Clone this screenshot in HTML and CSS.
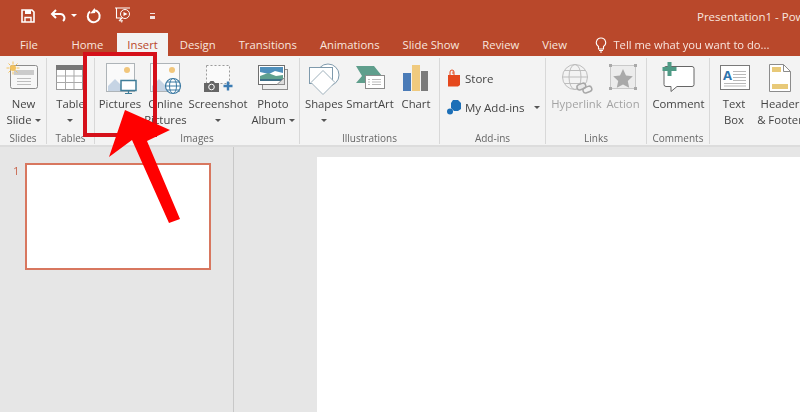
FILE: index.html
```html
<!DOCTYPE html>
<html lang="en">
<head>
<meta charset="utf-8">
<title>Presentation1 - PowerPoint</title>
<link rel="stylesheet" href="styles.css">
</head>
<body>
<div class="app">
  <header class="head">
    <div class="titlebar">
      <div class="qat">
        <svg class="q1" width="16" height="16" viewBox="0 0 16 16"><path d="M2 2h10l2 2v10H2z" fill="none" stroke="#fff" stroke-width="1.6"/><path d="M5 2h6v4H5z" fill="#fff"/><path d="M5 14V9.500h6V14" fill="none" stroke="#fff" stroke-width="1.400"/></svg>
        <svg class="q2" width="16" height="14" viewBox="0 0 16 14"><path d="M6 1 2 5l4 4" fill="none" stroke="#fff" stroke-width="2"/><path d="M2 5h8a4 4 0 0 1 3 7" fill="none" stroke="#fff" stroke-width="2"/></svg>
        <span class="caret light q3"></span>
        <svg class="q4" width="16" height="16" viewBox="0 0 16 16"><path d="M4 3.500a6 6 0 1 0 4-1.300" fill="none" stroke="#fff" stroke-width="2"/><path d="M9 0v5H4z" fill="#fff" transform="rotate(-6 8 3)"/></svg>
        <svg class="q5" width="18" height="17" viewBox="0 0 18 17"><path d="M1 1h15M2.500 1v10h6M5 14l3-3" fill="none" stroke="#fff" stroke-width="1.100"/><circle cx="11" cy="7" r="4.500" fill="none" stroke="#fff"/><path d="M9.500 5l4 2-4 2z" fill="#fff"/><path d="M5 13h4l-1 3z" fill="#f0d8cf"/></svg>
        <span class="custom q6"></span>
      </div>
      <div class="doc">Presentation1 - PowerPoint</div>
    </div>
    <nav class="tabs">
      <span class="tab file">File</span>
      <span class="tab">Home</span>
      <span class="tab active">Insert</span>
      <span class="tab">Design</span>
      <span class="tab">Transitions</span>
      <span class="tab">Animations</span>
      <span class="tab">Slide Show</span>
      <span class="tab">Review</span>
      <span class="tab">View</span>
      <span class="tell">
        <svg width="12" height="16" viewBox="0 0 12 16"><path d="M6 1a4.600 4.600 0 0 0-2.500 8.500V12h5V9.500A4.600 4.600 0 0 0 6 1z" fill="none" stroke="#fff" stroke-width="1.100"/><path d="M4 13.500h4M5 15h2" stroke="#fff"/></svg>
        Tell me what you want to do...
      </span>
    </nav>
  </header>

  <section class="ribbon">
    <div class="group g-slides">
      <div class="btns">
        <div class="btn w47">
          <svg width="47" height="36" viewBox="0 0 47 36"><rect x="10.500" y="5.500" width="27" height="23" rx="2" fill="#f7f7f7" stroke="#8c8c8c"/><rect x="14" y="10" width="20" height="5" fill="#cbcbcb"/><path d="M17 18.500h14M17 21.500h14M17 24.500h14" stroke="#bdbdbd"/><circle cx="13" cy="8" r="3" fill="#f3c25e"/><path d="M13 1.500v3M13 11.500v3M6.500 8h3M16.500 8h3M8.500 3.500l2 2M15.500 10.500l2 2M17.500 3.500l-2 2M10.500 10.500l-2 2" stroke="#f3c25e"/></svg>
          <span class="lbl">New<br>Slide <i class="caret"></i></span>
        </div>
      </div>
      <div class="gname">Slides</div>
    </div>

    <div class="group g-tables">
      <div class="btns">
        <div class="btn w47">
          <svg width="47" height="36" viewBox="0 0 47 36"><rect x="9.500" y="5.500" width="26" height="24" fill="#fff" stroke="#9a9a9a"/><rect x="9" y="5" width="27" height="5" fill="#777"/><path d="M9.500 16h26M9.500 22.500h26M18.500 10v19M27 10v19" stroke="#a9a9a9"/></svg>
          <span class="lbl">Table<br><i class="caret"></i></span>
        </div>
      </div>
      <div class="gname">Tables</div>
    </div>

    <div class="group g-images">
      <div class="btns">
        <div class="btn w46">
          <svg width="46" height="36" viewBox="0 0 46 36"><rect x="9.500" y="3.500" width="28" height="28" fill="#fafafa" stroke="#aeb4b8"/><circle cx="30" cy="10" r="3" fill="#f1c67c"/><path d="M11 31V26l7-7 7 7 3 5z" fill="#c6d4e4"/><rect x="24" y="20.500" width="15" height="10" fill="#fff" stroke="#3f7d99" stroke-width="1.500"/><path d="M31.500 31v2M28 33.500h7" stroke="#3f7d99" stroke-width="1.200"/></svg>
          <span class="lbl">Pictures</span>
        </div>
        <div class="btn w45">
          <svg width="45" height="36" viewBox="0 0 45 36"><rect x="7.500" y="3.500" width="29" height="28" fill="#fafafa" stroke="#aeb4b8"/><circle cx="29" cy="10" r="3" fill="#f1c67c"/><path d="M9 31V26l7-7 8 8v4z" fill="#c6d4e4"/><circle cx="30" cy="26" r="7.500" fill="#fff" stroke="#3c7aa3" stroke-width="1.200"/><ellipse cx="30" cy="26" rx="3.500" ry="7.500" fill="none" stroke="#3c7aa3"/><path d="M22.500 26h15M24 22h12M24 30h12" stroke="#3c7aa3"/></svg>
          <span class="lbl">Online<br>Pictures</span>
        </div>
        <div class="btn w60">
          <svg width="60" height="36" viewBox="0 0 60 36"><rect x="18.500" y="5.500" width="23" height="18" fill="#fafafa" stroke="#9b9b9b" stroke-dasharray="2 2"/><path d="M16 23h5l1.500-2h3l1.500 2h4v9H16z" fill="#666"/><circle cx="23.500" cy="27" r="2.800" fill="#666" stroke="#fff"/><path d="M40 21.500v9M35.500 26h9" stroke="#3c7cb3" stroke-width="2.400"/></svg>
          <span class="lbl">Screenshot<br><i class="caret"></i></span>
        </div>
        <div class="btn w50">
          <svg width="50" height="36" viewBox="0 0 50 36"><rect x="14.500" y="9.500" width="25" height="20" fill="#eee" stroke="#8d8d8d"/><rect x="10.500" y="5.500" width="26" height="19" fill="#fff" stroke="#6f6f6f"/><path d="M12 7h23v6l-8-2-6 3-9-2z" fill="#4f8fbb"/><path d="M12 16l8-3 8 3 7-1v4H12z" fill="#5fa08f"/><path d="M12 19h23v2H12z" fill="#3e6f87"/><path d="M29 24.500l7.500-7v7z" fill="#ddd" stroke="#8d8d8d"/></svg>
          <span class="lbl">Photo<br>Album <i class="caret"></i></span>
        </div>
      </div>
      <div class="gname">Images</div>
    </div>

    <div class="group g-illus">
      <div class="btns">
        <div class="btn w44">
          <svg width="44" height="36" viewBox="0 0 44 36"><circle cx="26" cy="15" r="11" fill="#fff" stroke="#7f9aac"/><rect x="7.500" y="7.500" width="23" height="16" fill="#fff" stroke="#7f9aac"/><path d="M21 11l12 12-12 12L9 23z" fill="#fff" stroke="#9fb1bc" transform="translate(0 -.5)"/></svg>
          <span class="lbl">Shapes<br><i class="caret"></i></span>
        </div>
        <div class="btn w48">
          <svg width="48" height="36" viewBox="0 0 48 36"><path d="M10 23l6-7-6-10h18l8 10-8 7z" fill="#5f9e8c"/><rect x="19.500" y="15.500" width="19" height="13" fill="#fff" stroke="#8c8c8c"/><path d="M26 19.500h9M26 22h9M26 24.500h9M22 19.500h2M22 22h2M22 24.500h2" stroke="#bbb"/></svg>
          <span class="lbl">SmartArt</span>
        </div>
        <div class="btn w44">
          <svg width="44" height="36" viewBox="0 0 44 36"><rect x="9" y="13" width="8" height="18" fill="#4a7bb7"/><rect x="18" y="5" width="8" height="26" fill="#f0ca7e"/><rect x="27" y="11" width="7" height="20" fill="#7b7b7b"/></svg>
          <span class="lbl">Chart</span>
        </div>
      </div>
      <div class="gname">Illustrations</div>
    </div>

    <div class="group g-addins">
      <div class="stack">
        <div class="row">
          <svg width="14" height="18" viewBox="0 0 14 18"><path d="M1 6h12v10l-2 1.500H1z" fill="#e5481d"/><path d="M3 6V3a2 2 0 0 1 4 0v3M6 5V2.500" fill="none" stroke="#e5481d"/></svg>
          <span>Store</span>
        </div>
        <div class="row">
          <svg width="14" height="15" viewBox="0 0 14 15"><path d="M6 0h5l3 3v6l-3 2H7L4 8V3z" fill="#1c6fb7"/><circle cx="3" cy="11.500" r="3" fill="#1c6fb7"/></svg>
          <span>My Add-ins</span>
          <i class="caret addcaret"></i>
        </div>
      </div>
      <div class="gname">Add-ins</div>
    </div>

    <div class="group g-links">
      <div class="btns">
        <div class="btn w51 muted">
          <svg width="51" height="36" viewBox="0 0 51 36"><circle cx="24" cy="17" r="12.500" fill="none" stroke="#bdbdbd"/><ellipse cx="24" cy="17" rx="6" ry="12.500" fill="none" stroke="#bdbdbd"/><path d="M11.500 17h25M13.500 10.500h21M13.500 23.500h21" stroke="#bdbdbd"/><rect x="26" y="24" width="9" height="5.500" rx="2.700" fill="#e9e9e9" stroke="#a8a8a8" stroke-width="1.500" transform="rotate(-20 30 27)"/><rect x="32" y="27" width="9" height="5.500" rx="2.700" fill="none" stroke="#a8a8a8" stroke-width="1.500" transform="rotate(-20 36 30)"/></svg>
          <span class="lbl">Hyperlink</span>
        </div>
        <div class="btn w42 muted">
          <svg width="42" height="36" viewBox="0 0 42 36"><rect x="8.500" y="5.500" width="25" height="23" fill="#ececec" stroke="#c9c9c9"/><path d="M21 9l3 6.500 6.800.8-5 4.700 1.400 6.700L21 24.500l-6.200 3.200 1.400-6.700-5-4.700 6.800-.8z" fill="#a9a9a9"/><path d="M7 4h3v3H7zM32 4h3v3h-3zM7 27h3v3H7zM32 27h3v3h-3z" fill="#a9a9a9"/></svg>
          <span class="lbl">Action</span>
        </div>
      </div>
      <div class="gname">Links</div>
    </div>

    <div class="group g-comments">
      <div class="btns">
        <div class="btn w63">
          <svg width="63" height="36" viewBox="0 0 63 36"><path d="M19 6.500h26a2 2 0 0 1 2 2v16a2 2 0 0 1-2 2H30l-6 5v-5h-5a2 2 0 0 1-2-2V8.500a2 2 0 0 1 2-2z" fill="#fff" stroke="#666"/><path d="M22.500 2v14M15.500 9h14" stroke="#4f9a85" stroke-width="4"/></svg>
          <span class="lbl">Comment</span>
        </div>
      </div>
      <div class="gname">Comments</div>
    </div>

    <div class="group g-text">
      <div class="btns">
        <div class="btn w40">
          <svg width="40" height="36" viewBox="0 0 40 36"><rect x="6.500" y="5.500" width="29" height="24" fill="#fff" stroke="#7a7a7a"/><text x="9" y="20" class="glyph">A</text><path d="M19 11.500h13M19 14.500h13M19 17.500h13M19 20.500h13M10 23.500h22M10 26h22" stroke="#b9b9b9"/></svg>
          <span class="lbl">Text<br>Box</span>
        </div>
        <div class="btn w52">
          <svg width="52" height="36" viewBox="0 0 52 36"><path d="M15.500 4.500h14l7 7v20h-21z" fill="#fff" stroke="#8c8c8c"/><path d="M29.500 4.500v7h7" fill="none" stroke="#8c8c8c"/><rect x="18" y="7" width="9" height="5" fill="#e8c978"/><rect x="18" y="24" width="16" height="5" fill="#e8c978"/></svg>
          <span class="lbl">Header<br>&amp; Footer</span>
        </div>
      </div>
    </div>
  </section>

  <main class="work">
    <aside class="thumbs">
      <span class="num">1</span>
      <div class="thumb"></div>
    </aside>
    <div class="stage">
      <div class="slide"></div>
    </div>
  </main>

  <div class="callout"></div>
  <svg class="arrow" width="100" height="130" viewBox="100 100 100 130"><path d="M125 110l45 20-23 11 33 78-11 4-37-83-23 17z" fill="#f00"/></svg>
</div>
</body>
</html>
```

FILE: styles.css
```css
* { box-sizing: border-box; }
html, body { margin: 0; padding: 0; }
body { width: 800px; height: 412px; overflow: hidden; background: #e6e6e6; }
.app { position: relative; width: 800px; height: 412px; overflow: hidden; display: flex; flex-direction: column; font-family: "Open Sans", sans-serif; font-size: 11.300px; color: #444; filter: blur(.35px); }

.head { background: #b9482b; color: #f8e6df; height: 56px; flex: none; }
.titlebar { height: 33px; display: flex; justify-content: space-between; align-items: center; overflow: hidden; }
.qat { display: flex; align-items: center; padding-left: 20px; margin-top: -2px; }
.q2 { margin-left: 14px; }
.q3 { margin-left: 5px; }
.q4 { margin-left: 9px; }
.q5 { margin-left: 12px; }
.q6 { margin-left: 18px; }
.custom { width: 5px; height: 6px; border-top: 1px solid #fff; border-bottom: 3px solid #fff; opacity: .85; }
.doc { width: 103px; white-space: nowrap; font-size: 11.500px; color: #f8e6df; overflow: hidden; flex: none; }

.tabs { height: 23px; display: flex; align-items: stretch; padding-left: 8px; font-size: 11.300px; white-space: nowrap; }
.tab { padding: 0 11.500px; line-height: 24px; }
.tab.file { margin-right: 10px; padding: 0 12px; }
.tab.active { background: #f3f3f3; color: #b9482b; padding: 0 10.500px; margin: 0 0 0 2px; }
.tell { margin-left: 17px; display: flex; align-items: center; gap: 6px; font-size: 11.200px; }

.ribbon { height: 91px; flex: none; display: flex; background: #f3f3f3; border-bottom: 2px solid #dcdcdc; overflow: hidden; }
.group { position: relative; flex: none; display: flex; flex-direction: column; height: 86px; margin-top: 2px; border-right: 1px solid #d8d8d8; }
.g-slides { width: 47px; }
.g-tables { width: 48px; }
.g-images { width: 205px; padding-left: 2px; }
.g-illus { width: 140px; padding-left: 2px; }
.g-addins { width: 106px; }
.g-links { width: 101px; padding-left: 5px; }
.g-comments { width: 63px; }
.g-text { width: 90px; padding-left: 4px; border-right: 0; }
.btns { display: flex; height: 74px; padding-top: 2px; }
.btn { flex: none; display: flex; flex-direction: column; align-items: center; }
.btn svg { display: block; flex: none; }
.w40 { width: 40px; } .w42 { width: 42px; } .w44 { width: 44px; } .w45 { width: 45px; }
.w46 { width: 46px; } .w47 { width: 47px; } .w48 { width: 48px; } .w50 { width: 50px; }
.w51 { width: 51px; } .w52 { width: 52px; } .w60 { width: 60px; } .w63 { width: 63px; }
.lbl { display: block; text-align: center; line-height: 16px; white-space: nowrap; }
.muted .lbl { color: #a3a3a3; }
.gname { height: 12px; line-height: 12px; margin-top: 2px; text-align: center; font-size: 10px; color: #666; }
.g-links .gname { margin-left: -5px; }
.g-images .gname, .g-illus .gname { margin-left: -2px; }

.caret { display: inline-block; width: 0; height: 0; border-left: 3px solid transparent; border-right: 3px solid transparent; border-top: 3px solid #555; vertical-align: middle; }
.caret.light { border-top-color: #fff; }
.stack { height: 74px; padding: 10px 0 0 7px; display: flex; flex-direction: column; gap: 9px; font-size: 11.500px; white-space: nowrap; }
.row { display: flex; align-items: center; gap: 4px; height: 20px; }
.addcaret { margin-left: 5px; }
.glyph { font-family: "Open Sans", sans-serif; font-size: 13px; font-weight: 700; fill: #2f74ad; }

.work { flex: 1; display: flex; min-height: 0; }
.thumbs { width: 234px; flex: none; display: flex; align-items: flex-start; padding: 16px 0 0 13px; border-right: 1px solid #c8c8c8; background: #e6e6e6; }
.num { width: 12px; line-height: 14px; margin-top: 1px; color: #c9664e; }
.thumb { width: 186px; height: 107px; background: #fff; border: 2px solid #d8775f; }
.stage { flex: 1; padding: 10px 0 0 83px; background: #e6e6e6; }
.slide { height: 100%; background: #fff; }

.callout { position: absolute; left: 83px; top: 52px; width: 74px; height: 85px; border: 4px solid #d5101a; }
.arrow { position: absolute; left: 100px; top: 100px; }
```
